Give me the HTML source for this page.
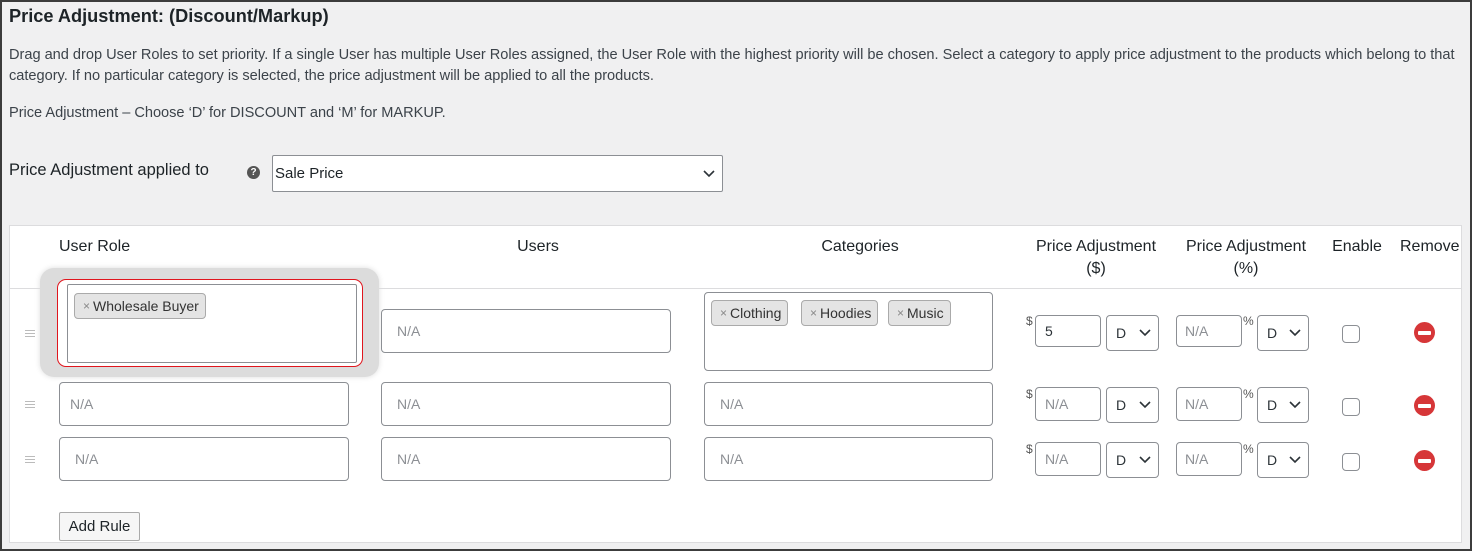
<!DOCTYPE html>
<html><head><meta charset="utf-8"><style>
*{box-sizing:border-box;margin:0;padding:0}
body{width:1472px;height:551px;overflow:hidden;background:#f0f0f1;font-family:"Liberation Sans",sans-serif;color:#1d2327;position:relative}
.frame{position:absolute;left:0;top:0;width:1472px;height:551px;border:2px solid #3c3c3c;border-right-width:2px}
.a{position:absolute}
.t{position:absolute;white-space:nowrap}
.inp{position:absolute;background:#fff;border:1px solid #8c8f94;border-radius:4px;font-size:14px;color:#8c8f94;padding-left:15px;display:flex;align-items:center}
.sel{position:absolute;background:#fff;border:1px solid #8c8f94;border-radius:4px;font-size:14px;color:#2c3338;padding-left:9px;display:flex;align-items:center}
.sel svg{position:absolute;right:7px;top:50%;margin-top:-4px}
.tag{position:absolute;background:#e4e4e4;border:1px solid #aaa;border-radius:4px;font-size:14px;color:#333;padding:0 6px 0 8px;display:flex;align-items:center;height:26px}
.tag b{font-weight:normal;color:#888;font-size:12px;margin-right:3px}
.cb{position:absolute;width:18px;height:18px;border:1px solid #8c8f94;border-radius:4px;background:#fff}
.rm{position:absolute;width:21px;height:21px;border-radius:50%;background:#d63638}
.rm:after{content:"";position:absolute;left:4px;top:8.5px;width:13px;height:4px;background:#fff;border-radius:1px}
.h{position:absolute;width:10px;height:7px;border-top:1px solid #bbb;border-bottom:1px solid #bbb}
.h:after{content:"";position:absolute;left:0;top:2px;width:10px;border-top:1px solid #bbb}
.th{position:absolute;font-size:16px;color:#1d2327;text-align:center;line-height:22px}
.p{position:absolute;white-space:nowrap;font-size:14.6px;color:#3c434a;letter-spacing:-0.02px}
</style></head><body>
<div class="t" style="left:9px;top:6px;font-size:18.2px;font-weight:bold;color:#1d2327">Price Adjustment: (Discount/Markup)</div>
<div class="p" style="left:9px;top:47px">Drag and drop User Roles to set priority. If a single User has multiple User Roles assigned, the User Role with the highest priority will be chosen. Select a category to apply price adjustment to the products which belong to that</div>
<div class="p" style="left:9px;top:68px">category. If no particular category is selected, the price adjustment will be applied to all the products.</div>
<div class="p" style="left:9px;top:105px">Price Adjustment – Choose ‘D’ for DISCOUNT and ‘M’ for MARKUP.</div>
<div class="t" style="left:9px;top:161px;font-size:16.5px;color:#1d2327">Price Adjustment applied to</div>
<div class="a" style="left:247px;top:166px;width:13px;height:13px;border-radius:50%;background:#555;color:#fff;font-size:10px;font-weight:bold;text-align:center;line-height:13px">?</div>
<div class="sel" style="left:272px;top:155px;width:451px;height:37px;padding-left:2px;font-size:15px;color:#1d2327;border-radius:2px">Sale Price<svg width="12" height="8"><path d="M1 1l5 5 5-5" stroke="#2c3338" stroke-width="1.6" fill="none"/></svg></div>

<div class="a" style="left:9px;top:225px;width:1453px;height:318px;background:#fff;border:1px solid #dcdcde"></div>
<div class="a" style="left:10px;top:288px;width:1451px;height:1px;background:#dcdcde"></div>
<div class="th" style="left:59px;top:236px;text-align:left">User Role</div>
<div class="th" style="left:488px;top:236px;width:100px">Users</div>
<div class="th" style="left:800px;top:236px;width:120px">Categories</div>
<div class="th" style="left:1021px;top:236px;width:150px">Price Adjustment<br>($)</div>
<div class="th" style="left:1171px;top:236px;width:150px">Price Adjustment<br>(%)</div>
<div class="th" style="left:1327px;top:236px;width:60px">Enable</div>
<div class="th" style="left:1396px;top:236px;width:76px;text-align:left;padding-left:4px">Remove</div>

<div class="a" style="left:40px;top:268px;width:339px;height:109px;background:#dcdcdc;border-radius:14px;box-shadow:0 0 6px #ddd"></div>
<div class="a" style="left:57px;top:279px;width:306px;height:88px;background:#fff;border:1.5px solid #e0161e;border-radius:9px"></div>
<div class="a" style="left:67px;top:284px;width:290px;height:79px;background:#fff;border:1px solid #8c8f94;border-radius:2px"></div>
<div class="tag" style="left:74px;top:293px"><b>×</b>Wholesale Buyer</div>
<div class="h" style="left:25px;top:330px"></div>
<div class="inp" style="left:381px;top:309px;width:290px;height:44px">N/A</div>
<div class="a" style="left:704px;top:292px;width:289px;height:79px;background:#fff;border:1px solid #8c8f94;border-radius:4px"></div>
<div class="tag" style="left:711px;top:300px"><b>×</b>Clothing</div>
<div class="tag" style="left:801px;top:300px"><b>×</b>Hoodies</div>
<div class="tag" style="left:888px;top:300px"><b>×</b>Music</div>

<div class="t" style="left:1026px;top:314px;font-size:12px;color:#555">$</div>
<div class="inp" style="left:1035px;top:315px;width:66px;height:32px;color:#2c3338;padding-left:9px">5</div>
<div class="sel" style="left:1106px;top:315px;width:53px;height:36px">D<svg width="12" height="8"><path d="M1 1l5 5 5-5" stroke="#2c3338" stroke-width="1.6" fill="none"/></svg></div>
<div class="inp" style="left:1176px;top:315px;width:66px;height:32px;padding-left:8px">N/A</div>
<div class="t" style="left:1243px;top:314px;font-size:12px;color:#555">%</div>
<div class="sel" style="left:1257px;top:315px;width:52px;height:36px">D<svg width="12" height="8"><path d="M1 1l5 5 5-5" stroke="#2c3338" stroke-width="1.6" fill="none"/></svg></div>
<div class="cb" style="left:1342px;top:325px"></div>
<div class="rm" style="left:1414px;top:322px"></div>

<div class="h" style="left:25px;top:401px"></div>
<div class="inp" style="left:59px;top:382px;width:290px;height:44px;padding-left:10px">N/A</div>
<div class="inp" style="left:381px;top:382px;width:290px;height:44px">N/A</div>
<div class="inp" style="left:704px;top:382px;width:289px;height:44px">N/A</div>
<div class="t" style="left:1026px;top:387px;font-size:12px;color:#555">$</div>
<div class="inp" style="left:1035px;top:387px;width:66px;height:34px;padding-left:9px">N/A</div>
<div class="sel" style="left:1106px;top:387px;width:53px;height:36px">D<svg width="12" height="8"><path d="M1 1l5 5 5-5" stroke="#2c3338" stroke-width="1.6" fill="none"/></svg></div>
<div class="inp" style="left:1176px;top:387px;width:66px;height:34px;padding-left:8px">N/A</div>
<div class="t" style="left:1243px;top:387px;font-size:12px;color:#555">%</div>
<div class="sel" style="left:1257px;top:387px;width:52px;height:36px">D<svg width="12" height="8"><path d="M1 1l5 5 5-5" stroke="#2c3338" stroke-width="1.6" fill="none"/></svg></div>
<div class="cb" style="left:1342px;top:398px"></div>
<div class="rm" style="left:1414px;top:395px"></div>

<div class="h" style="left:25px;top:456px"></div>
<div class="inp" style="left:59px;top:437px;width:290px;height:44px">N/A</div>
<div class="inp" style="left:381px;top:437px;width:290px;height:44px">N/A</div>
<div class="inp" style="left:704px;top:437px;width:289px;height:44px">N/A</div>
<div class="t" style="left:1026px;top:442px;font-size:12px;color:#555">$</div>
<div class="inp" style="left:1035px;top:442px;width:66px;height:34px;padding-left:9px">N/A</div>
<div class="sel" style="left:1106px;top:442px;width:53px;height:36px">D<svg width="12" height="8"><path d="M1 1l5 5 5-5" stroke="#2c3338" stroke-width="1.6" fill="none"/></svg></div>
<div class="inp" style="left:1176px;top:442px;width:66px;height:34px;padding-left:8px">N/A</div>
<div class="t" style="left:1243px;top:442px;font-size:12px;color:#555">%</div>
<div class="sel" style="left:1257px;top:442px;width:52px;height:36px">D<svg width="12" height="8"><path d="M1 1l5 5 5-5" stroke="#2c3338" stroke-width="1.6" fill="none"/></svg></div>
<div class="cb" style="left:1342px;top:453px"></div>
<div class="rm" style="left:1414px;top:450px"></div>

<div class="a" style="left:59px;top:512px;width:81px;height:29px;background:#f6f6f6;border:1px solid #aaa;border-radius:2px;font-size:15px;color:#1d2327;text-align:center;line-height:27px">Add Rule</div>
<div class="frame"></div>
</body></html>
